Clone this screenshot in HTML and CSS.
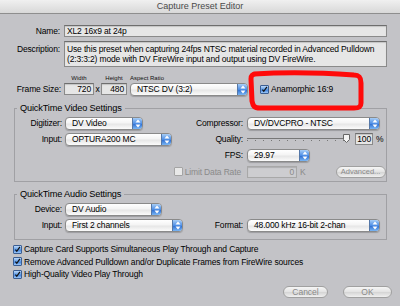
FILE: index.html
```html
<!DOCTYPE html>
<html>
<head>
<meta charset="utf-8">
<link rel="stylesheet" href="styles.css">
</head>
<body>
<div class="window">
  <header class="titlebar">Capture Preset Editor</header>
  <main class="content">
    <div class="form-row name-row">
      <span class="lbl">Name:</span>
      <div class="field">XL2 16x9 at 24p</div>
    </div>
    <div class="form-row desc-row">
      <span class="lbl">Description:</span>
      <div class="field textarea">Use this preset when capturing 24fps NTSC material recorded in Advanced Pulldown (2:3:3:2) mode with DV FireWire input and output using DV FireWire.</div>
    </div>
    <div class="frame-size">
      <span class="head h-width">Width</span>
      <span class="head h-height">Height</span>
      <span class="head h-aspect">Aspect Ratio</span>
      <span class="lbl fs-lbl">Frame Size:</span>
      <div class="field num f-w">720</div>
      <span class="times">x</span>
      <div class="field num f-h">480</div>
      <div class="popup p-aspect"><span class="ptext">NTSC DV (3:2)</span><span class="stepper"><svg width="6" height="9" viewBox="0 0 6 9"><path d="M3 0.5 L5.5 3.5 H0.5Z M3 8.5 L5.5 5.5 H0.5Z" fill="#fff"/></svg></span></div>
      <label class="check anam"><span class="cbox on"><svg width="9" height="9" viewBox="0 0 9 9"><path d="M1.8 4.6 L3.6 6.8 L7.6 1.2" fill="none" stroke="#111" stroke-width="1.6"/></svg></span>Anamorphic 16:9</label>
    </div>

    <fieldset class="group video">
      <legend>QuickTime Video Settings</legend>
      <div class="grid">
        <span class="lbl r1 c1">Digitizer:</span>
        <div class="popup p-dig r1 c2"><span class="ptext">DV Video</span><span class="stepper"><svg width="6" height="9" viewBox="0 0 6 9"><path d="M3 0.5 L5.5 3.5 H0.5Z M3 8.5 L5.5 5.5 H0.5Z" fill="#fff"/></svg></span></div>
        <span class="lbl r1 c3">Compressor:</span>
        <div class="popup p-comp r1 c4"><span class="ptext">DV/DVCPRO - NTSC</span><span class="stepper"><svg width="6" height="9" viewBox="0 0 6 9"><path d="M3 0.5 L5.5 3.5 H0.5Z M3 8.5 L5.5 5.5 H0.5Z" fill="#fff"/></svg></span></div>

        <span class="lbl r2 c1">Input:</span>
        <div class="popup p-in r2 c2"><span class="ptext">OPTURA200 MC</span><span class="stepper"><svg width="6" height="9" viewBox="0 0 6 9"><path d="M3 0.5 L5.5 3.5 H0.5Z M3 8.5 L5.5 5.5 H0.5Z" fill="#fff"/></svg></span></div>
        <span class="lbl r2 c3">Quality:</span>
        <div class="quality r2 c4">
          <div class="slider"><span class="track"></span><span class="thumb"><svg width="7" height="9" viewBox="0 0 7 9"><path d="M0.5 0.5 H6.5 V5.5 L3.5 8.5 L0.5 5.5Z" fill="#f4f4f4" stroke="#666"/></svg></span></div>
          <div class="field num q-val">100</div>
          <span class="unit">%</span>
        </div>

        <span class="lbl r3 c3">FPS:</span>
        <div class="popup p-fps r3 c4"><span class="ptext">29.97</span><span class="stepper"><svg width="6" height="9" viewBox="0 0 6 9"><path d="M3 0.5 L5.5 3.5 H0.5Z M3 8.5 L5.5 5.5 H0.5Z" fill="#fff"/></svg></span></div>

        <label class="check disabled limit r4"><span class="cbox off"></span>Limit Data Rate</label>
        <div class="rate r4 c4">
          <div class="field num dis r-val">0</div>
          <span class="unit dim">K</span>
          <button class="btn small dim">Advanced...</button>
        </div>
      </div>
    </fieldset>

    <fieldset class="group audio">
      <legend>QuickTime Audio Settings</legend>
      <div class="grid">
        <span class="lbl r1 c1">Device:</span>
        <div class="popup p-dev r1 c2"><span class="ptext">DV Audio</span><span class="stepper"><svg width="6" height="9" viewBox="0 0 6 9"><path d="M3 0.5 L5.5 3.5 H0.5Z M3 8.5 L5.5 5.5 H0.5Z" fill="#fff"/></svg></span></div>
        <span class="lbl r2 c1">Input:</span>
        <div class="popup p-ain r2 c2"><span class="ptext">First 2 channels</span><span class="stepper"><svg width="6" height="9" viewBox="0 0 6 9"><path d="M3 0.5 L5.5 3.5 H0.5Z M3 8.5 L5.5 5.5 H0.5Z" fill="#fff"/></svg></span></div>
        <span class="lbl r2 c3">Format:</span>
        <div class="popup p-fmt r2 c4"><span class="ptext">48.000 kHz 16-bit 2-chan</span><span class="stepper"><svg width="6" height="9" viewBox="0 0 6 9"><path d="M3 0.5 L5.5 3.5 H0.5Z M3 8.5 L5.5 5.5 H0.5Z" fill="#fff"/></svg></span></div>
      </div>
    </fieldset>

    <div class="checks">
      <label class="check"><span class="cbox on"><svg width="9" height="9" viewBox="0 0 9 9"><path d="M1.8 4.6 L3.6 6.8 L7.6 1.2" fill="none" stroke="#111" stroke-width="1.6"/></svg></span>Capture Card Supports Simultaneous Play Through and Capture</label>
      <label class="check"><span class="cbox on"><svg width="9" height="9" viewBox="0 0 9 9"><path d="M1.8 4.6 L3.6 6.8 L7.6 1.2" fill="none" stroke="#111" stroke-width="1.6"/></svg></span>Remove Advanced Pulldown and/or Duplicate Frames from FireWire sources</label>
      <label class="check"><span class="cbox on"><svg width="9" height="9" viewBox="0 0 9 9"><path d="M1.8 4.6 L3.6 6.8 L7.6 1.2" fill="none" stroke="#111" stroke-width="1.6"/></svg></span>High-Quality Video Play Through</label>
    </div>

    <div class="buttons">
      <button class="btn dim">Cancel</button>
      <button class="btn dim">OK</button>
    </div>
  </main>
  <svg class="annotation" width="124" height="44" viewBox="0 0 124 44"><path d="M8 5 C40 3 80 4 108 6 C114 6 115 9 115 14 L115 34 C115 38 113 39 108 39 L14 39 C8 39 7 37 6 32 L5 10 C5 7 6 5 10 5" fill="none" stroke="#ff0a0a" stroke-width="5" stroke-linejoin="round" stroke-linecap="round"/></svg>
</div>
</body>
</html>
```
FILE: styles.css
```css
* { box-sizing: border-box; }
html, body { margin: 0; padding: 0; }
body {
  width: 400px;
  height: 306px;
  overflow: hidden;
  background: #c3c3c7;
  font-family: "Liberation Sans", Arial, sans-serif;
  font-size: 8.5px;
  letter-spacing: -0.15px;
  color: #000;
}
.window { position: relative; width: 400px; height: 306px; }
.titlebar {
  height: 14px;
  line-height: 13px;
  text-align: center;
  font-size: 9px;
  letter-spacing: 0;
  color: #4a4a4a;
  background: linear-gradient(#f0f0f0, #d8d8d8);
  border-bottom: 1px solid #8e8e8e;
}
.content { padding: 0 13px 0 0; }
.lbl { text-align: right; white-space: nowrap; }
.form-row { display: grid; grid-template-columns: 60px 1fr; column-gap: 4px; }
.form-row .lbl { line-height: 12px; }
.name-row { margin-top: 11px; height: 12px; }
.desc-row { margin-top: 4px; height: 26px; }
.desc-row .lbl { padding-top: 2px; }
.field {
  background: #e6e6e6;
  border: 1px solid #8a8a8a;
  border-top-color: #6e6e6e;
  box-shadow: inset 0 1px 1px rgba(0,0,0,0.15);
  padding: 0 2px;
  line-height: 10px;
  white-space: nowrap;
  overflow: hidden;
}
.textarea { white-space: normal; padding: 2px 2px; line-height: 10px; }
.num { text-align: right; }
.frame-size {
  margin-top: 8px;
  display: grid;
  grid-template-columns: 64px 30px 7px 29px 130px auto;
  grid-template-rows: 7px 14px;
  align-items: center;
}
.head { font-size: 6px; line-height: 7px; grid-row: 1; color: #111; letter-spacing: 0; }
.h-width { grid-column: 2; text-align: center; }
.h-height { grid-column: 4; width: 26px; text-align: center; }
.h-aspect { grid-column: 5; }
.fs-lbl { grid-row: 2; grid-column: 1; padding-right: 3px; }
.f-w { grid-row: 2; grid-column: 2; height: 12px; }
.times { grid-row: 2; grid-column: 3; text-align: center; }
.f-h { grid-row: 2; grid-column: 4; width: 26px; height: 12px; }
.p-aspect { grid-row: 2; grid-column: 5; width: 118px; }
.anam { grid-row: 2; grid-column: 6; }
.popup {
  height: 13px;
  display: flex;
  align-items: center;
  border: 1px solid #8a8a8a;
  border-radius: 4px;
  background: linear-gradient(#ffffff, #f4f4f4 45%, #e6e6e6 55%, #fbfbfb);
  box-shadow: 0 1px 1px rgba(0,0,0,0.2);
  padding-left: 6px;
  overflow: hidden;
}
.ptext { flex: 1; white-space: nowrap; line-height: 11px; }
.stepper {
  width: 10px;
  height: 100%;
  display: flex;
  align-items: center;
  justify-content: center;
  background: linear-gradient(#a8cdf6, #4d8ee6 50%, #2f6fd2 55%, #7ab6f4);
  border-left: 1px solid #5578a8;
}
.check { display: flex; align-items: center; white-space: nowrap; }
.cbox {
  width: 9px;
  height: 9px;
  margin-right: 2px;
  border: 1px solid #3b5e93;
  border-radius: 1px;
  display: flex;
  align-items: center;
  justify-content: center;
  flex: none;
}
.cbox.on { background: linear-gradient(#bcd9fa, #5c9ae6 50%, #3d7fe0 55%, #9cc8f6); }
.cbox.off { background: #e8e8e8; border-color: #a4a4a4; }
.cbox svg { display: block; }
.disabled { color: #8a8a8a; }
.dim { color: #8a8a8a; }

.group {
  margin: 0 0 0 14px;
  border: 1px solid #a0a0a4;
  padding: 3px 0 2px 0;
  min-width: 0;
}
.group legend {
  font-size: 9.2px;
  line-height: 10px;
  padding: 0 3px;
  margin-left: 2px;
}
.video { margin-top: 7px; padding-bottom: 3px; }
.audio { margin-top: 7px; padding-bottom: 7px; }
.grid {
  display: grid;
  grid-template-columns: 50px 115px 67px 139px;
  grid-auto-rows: 14px;
  row-gap: 2px;
  align-items: center;
}
.grid .lbl.c1 { padding-right: 3px; }
.grid .lbl.c3 { padding-right: 4px; }
.c1 { grid-column: 1; }
.c2 { grid-column: 2; }
.c3 { grid-column: 3; }
.c4 { grid-column: 4; }
.r1 { grid-row: 1; }
.r2 { grid-row: 2; }
.r3 { grid-row: 3; }
.r4 { grid-row: 4; margin-top: 1px; }
.p-dig { width: 78px; }
.p-comp { width: 133px; }
.p-in { width: 107px; }
.p-fps { width: 63px; }
.p-dev { width: 97px; }
.p-ain { width: 118px; }
.p-fmt { width: 133px; }
.quality { display: flex; align-items: center; }
.slider { position: relative; width: 104px; height: 12px; }
.track {
  position: absolute;
  left: 0; right: 2px; top: 5px;
  height: 3px;
  border-top: 1px solid #777;
  background: repeating-linear-gradient(90deg, #777 0 1px, transparent 1px 8px);
  background-size: 100% 2px;
  background-position: 0 1px;
  background-repeat: no-repeat;
}
.thumb { position: absolute; left: 96px; top: 1px; }
.thumb svg { display: block; }
.q-val { width: 18px; height: 12px; margin-left: 4px; padding: 0 1px; }
.unit { margin-left: 3px; }
.limit { grid-column: 1 / 4; justify-self: end; padding-right: 6px; }
.rate { display: flex; align-items: center; }
.r-val { width: 50px; height: 12px; background: #cdcdd0; border-color: #a8a8a8; color: #8a8a8a; }
.btn {
  font-family: inherit;
  font-size: 7.5px;
  letter-spacing: 0;
  height: 12px;
  border: 1px solid #a0a0a0;
  border-radius: 6px;
  background: linear-gradient(#f6f6f6, #e2e2e2 50%, #d6d6d6 55%, #f0f0f0);
  padding: 0;
  line-height: 10px;
}
.btn.small { width: 50px; margin-left: 30px; }
.checks { margin: 3px 0 0 13px; }
.checks .check { height: 12.5px; line-height: 12px; }
.buttons { display: flex; justify-content: flex-end; gap: 15px; margin: 5px -5px 0 0; }
.buttons .btn { font-size: 8.5px; }
.buttons .btn:first-child { width: 45px; }
.buttons .btn:last-child { width: 49px; }
.annotation { position: absolute; left: 246px; top: 69px; }
```
